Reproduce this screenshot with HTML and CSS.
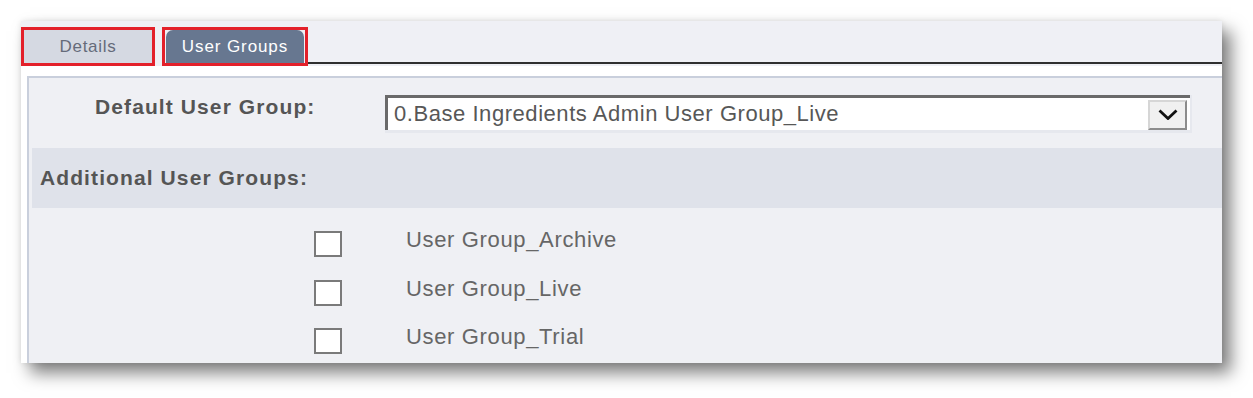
FILE: index.html
```html
<!DOCTYPE html>
<html>
<head>
  <title>User Groups</title>
  <link rel="stylesheet" href="styles.css">
</head>
<body>

  <div class="card">
    <div class="tabs">
      <div class="tab"><span class="tab-inner">Details</span></div>
      <div class="tab tab-active"><span class="tab-inner">User Groups</span></div>
      <div class="tab-line"></div>
    </div>

    <div class="panel">
      <div class="default-row">
        <label class="field-label">Default User Group:</label>
        <div class="select-frame">
          <div class="select-box">
            <span class="select-text">0.Base Ingredients Admin User Group_Live</span>
            <span class="select-btn">
              <svg width="20" height="11" viewBox="0 0 20 11">
                <polyline points="1.5,1.5 10,9.5 18.5,1.5" fill="none" stroke="#111" stroke-width="2.8"/>
              </svg>
            </span>
          </div>
        </div>
      </div>

      <div class="band">Additional User Groups:</div>

      <div class="group-list">
        <div class="group-row">
          <span class="check"></span>
          <span class="group-name">User Group_Archive</span>
        </div>
        <div class="group-row">
          <span class="check"></span>
          <span class="group-name">User Group_Live</span>
        </div>
        <div class="group-row">
          <span class="check"></span>
          <span class="group-name">User Group_Trial</span>
        </div>
      </div>
    </div>
  </div>

</body>
</html>
```

FILE: styles.css
```css
body {
  margin: 0;
  padding: 21px 0 34px 21px;
  background-color: #fff;
  font-family: "Liberation Sans", Arial, sans-serif;
}

.card {
  width: 1201px;
  height: 342px;
  overflow: hidden;
  background-color: #fff;
  box-shadow: 9px 10px 16px rgba(0, 0, 0, 0.5), 0 0 6px rgba(0, 0, 0, 0.1);
  display: flex;
  flex-direction: column;
}

/* Pestanas */
.tabs {
  display: flex;
  align-items: flex-end;
  height: 45px;
  flex-shrink: 0;
  background-color: #eff0f5;
}

.tab {
  box-sizing: border-box;
  height: 39px;
  border: 3px solid #e3202a;
  padding: 0;
  display: flex;
  margin-right: 7px;
}

.tab:first-child {
  width: 134px;
}

.tab-active {
  width: 146px;
  margin-right: 0;
  padding-left: 1px;
  padding-right: 1px;
}

.tab-inner {
  flex: 1;
  display: flex;
  align-items: center;
  justify-content: center;
  background-color: #d5d9e2;
  color: #656b7a;
  font-size: 17px;
  letter-spacing: 0.7px;
}

.tab-active .tab-inner {
  background-color: #677790;
  color: #fff;
  border-radius: 7px 7px 0 0;
  letter-spacing: 0.9px;
}

.tab-line {
  flex: 1;
  height: 2px;
  background-color: #2f2f2f;
  margin-bottom: 2px;
}

/* Panel */
.panel {
  flex: 1;
  min-height: 0;
  margin: 10px 0 0 6px;
  border-top: 2px solid #c9cfdc;
  border-left: 2px solid #c9cfdc;
  background-color: #eff0f4;
  padding-left: 3px;
}

.default-row {
  display: flex;
  align-items: flex-start;
  height: 70px;
  padding-top: 17px;
  box-sizing: border-box;
}

.field-label {
  width: 353px;
  padding-left: 63px;
  box-sizing: border-box;
  font-weight: bold;
  font-size: 21px;
  letter-spacing: 1.1px;
  color: #555;
  line-height: 24px;
}

.select-frame {
  width: 807px;
  height: 38px;
  background-color: #e6e8ee;
  box-sizing: border-box;
  padding-right: 2px;
  padding-bottom: 3px;
}

.select-box {
  height: 100%;
  box-sizing: border-box;
  background-color: #fff;
  border-top: 3px solid #6a6a6a;
  border-left: 3px solid #6a6a6a;
  display: flex;
  align-items: center;
  padding-left: 6px;
  padding-right: 3px;
}

.select-text {
  flex: 1;
  font-size: 22px;
  letter-spacing: 0.55px;
  color: #575757;
}

.select-btn {
  width: 39px;
  height: 30px;
  box-sizing: border-box;
  background-color: #f0f0f0;
  border: 2px solid #8c8c8c;
  border-top-color: #d6d6d6;
  border-left-color: #d6d6d6;
  display: flex;
  align-items: center;
  justify-content: center;
  margin-top: 1px;
}

.band {
  height: 60px;
  background-color: #dfe2ea;
  display: flex;
  align-items: center;
  padding-left: 8px;
  font-weight: bold;
  font-size: 21px;
  letter-spacing: 1.1px;
  color: #555;
}

.group-list {
  padding: 23px 0 0 282px;
}

.group-row {
  display: flex;
  align-items: flex-start;
  height: 48.5px;
}

.check {
  width: 28px;
  height: 26px;
  flex-shrink: 0;
  box-sizing: border-box;
  border: 2px solid #7a7a7a;
  background-color: #fff;
}

.group-name {
  margin-left: 64px;
  font-size: 22px;
  letter-spacing: 0.65px;
  line-height: 18px;
  color: #666;
}
```
